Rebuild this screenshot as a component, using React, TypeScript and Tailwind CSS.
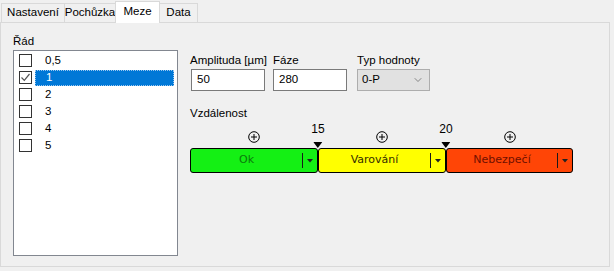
import { ChevronDown } from "lucide-react";

const tabs = [
  { label: "Nastavení", width: "w-[64px]" },
  { label: "Pochůzka", width: "w-[52px]" },
  { label: "Meze", width: "w-[45px]", active: true },
  { label: "Data", width: "w-[39px]" },
];

const orders = ["0,5", "1", "2", "3", "4", "5"];

const zones = [
  { label: "Ok", bg: "bg-[#14f014]", text: "text-[#0b7a0b]", width: "w-[128px]" },
  { label: "Varování", bg: "bg-[#ffff00]", text: "text-[#352d00]", width: "w-[128px]" },
  { label: "Nebezpečí", bg: "bg-[#ff4506]", text: "text-[#701000]", width: "w-[127px]" },
];

function PlusCircle() {
  return (
    <svg width="12" height="12" viewBox="0 0 12 12" className="block">
      <circle cx="6" cy="6" r="5.3" fill="none" stroke="#000" strokeWidth="1" />
      <path d="M6 3v6M3 6h6" stroke="#000" strokeWidth="1" />
    </svg>
  );
}

function Marker({ value, left }: { value: string; left: string }) {
  return (
    <div className={`absolute top-0 ${left} -translate-x-1/2 flex flex-col items-center`}>
      <span className="text-[12px] leading-[16px] text-black">{value}</span>
      <svg width="9" height="6" viewBox="0 0 9 6" className="block mt-[5px]">
        <path d="M0 0h9L4.5 6z" fill="#000" />
      </svg>
    </div>
  );
}

function CheckBox({ checked }: { checked?: boolean }) {
  return (
    <div className="w-[13px] h-[13px] border border-[#333] bg-white flex items-center justify-center shrink-0">
      {checked && (
        <svg width="11" height="11" viewBox="0 0 11 11">
          <path d="M1.5 5.5l2.8 2.8 5.2-6.3" fill="none" stroke="#555" strokeWidth="1.2" />
        </svg>
      )}
    </div>
  );
}

export default function App() {
  return (
    <div className="w-[614px] h-[271px] bg-[#f0f0f0] text-[11.5px] text-black font-['Liberation_Sans',sans-serif] overflow-hidden">
      <div className="flex items-end h-[22px] pl-[2px]">
        {tabs.map((tab) => (
          <div
            key={tab.label}
            className={
              tab.active
                ? `${tab.width} h-[22px] -ml-px -mb-px bg-white border border-b-0 border-[#d9d9d9] flex items-center justify-center relative z-10 leading-none pb-[2px]`
                : `${tab.width} h-[19px] -ml-px bg-[#f0f0f0] border border-b-0 border-[#d9d9d9] flex items-center justify-center leading-none`
            }
          >
            {tab.label}
          </div>
        ))}
      </div>

      <div className="w-[610px] h-[245px] border border-[#d9d9d9] flex">
        <div className="pl-[12px] pt-[10px]">
          <div className="leading-[16px]">Řád</div>
          <div className="mt-px w-[165px] h-[206px] border border-[#828790] bg-white pt-[1px]">
            {orders.map((o) => {
              const selected = o === "1";
              return (
                <div key={o} className="h-[17px] flex items-center pl-[5px] pr-[3px]">
                  <CheckBox checked={selected} />
                  <div
                    className={
                      selected
                        ? "ml-[3px] flex-1 h-[16px] flex items-center pl-[11px] bg-[#0078d7] text-white outline-1 outline-dotted outline-[#9cc8f0] -outline-offset-1"
                        : "ml-[3px] flex-1 h-[16px] flex items-center pl-[10px]"
                    }
                  >
                    {o}
                  </div>
                </div>
              );
            })}
          </div>
        </div>

        <div className="pl-[12px] pt-[29px]">
          <div className="flex">
            <div className="w-[83px] flex flex-col">
              <span className="leading-[16px]">Amplituda [µm]</span>
              <div className="mt-px ml-px w-[74px] h-[22px] border border-[#7a7a7a] bg-white flex items-center pl-[5px]">50</div>
            </div>
            <div className="w-[84px] flex flex-col">
              <span className="leading-[16px]">Fáze</span>
              <div className="mt-px w-[74px] h-[22px] border border-[#7a7a7a] bg-white flex items-center pl-[5px]">280</div>
            </div>
            <div className="flex flex-col">
              <span className="leading-[16px]">Typ hodnoty</span>
              <div className="mt-px w-[73px] h-[22px] border border-[#adadad] bg-[#e1e1e1] flex items-center justify-between pl-[4px] pr-[5px] text-black">
                <span>0-P</span>
                <ChevronDown size={12} strokeWidth={1.5} className="text-[#666]" />
              </div>
            </div>
          </div>

          <div className="mt-[14px] leading-[16px]">Vzdálenost</div>

          <div className="relative w-[383px] h-[27px]">
            <div className="grid grid-cols-[128px_128px_127px] pt-[10px]">
              <div className="flex justify-center"><PlusCircle /></div>
              <div className="flex justify-center"><PlusCircle /></div>
              <div className="flex justify-center"><PlusCircle /></div>
            </div>
            <Marker value="15" left="left-[128px]" />
            <Marker value="20" left="left-[256px]" />
          </div>

          <div className="flex h-[25px]">
            {zones.map((z) => (
              <div
                key={z.label}
                className={`${z.width} h-full ${z.bg} border border-black rounded-[3px] flex items-stretch`}
              >
                <div className={`flex-1 flex items-center justify-center ${z.text} font-['DejaVu_Sans',sans-serif] text-[11px]`}>
                  {z.label}
                </div>
                <div className="w-px bg-[#1a1a1a] my-[4px]" />
                <div className="w-[14px] flex items-center justify-center">
                  <svg width="6" height="4" viewBox="0 0 6 4">
                    <path d="M0 0h6L3 3.5z" fill="#222" />
                  </svg>
                </div>
              </div>
            ))}
          </div>
        </div>
      </div>
    </div>
  );
}
